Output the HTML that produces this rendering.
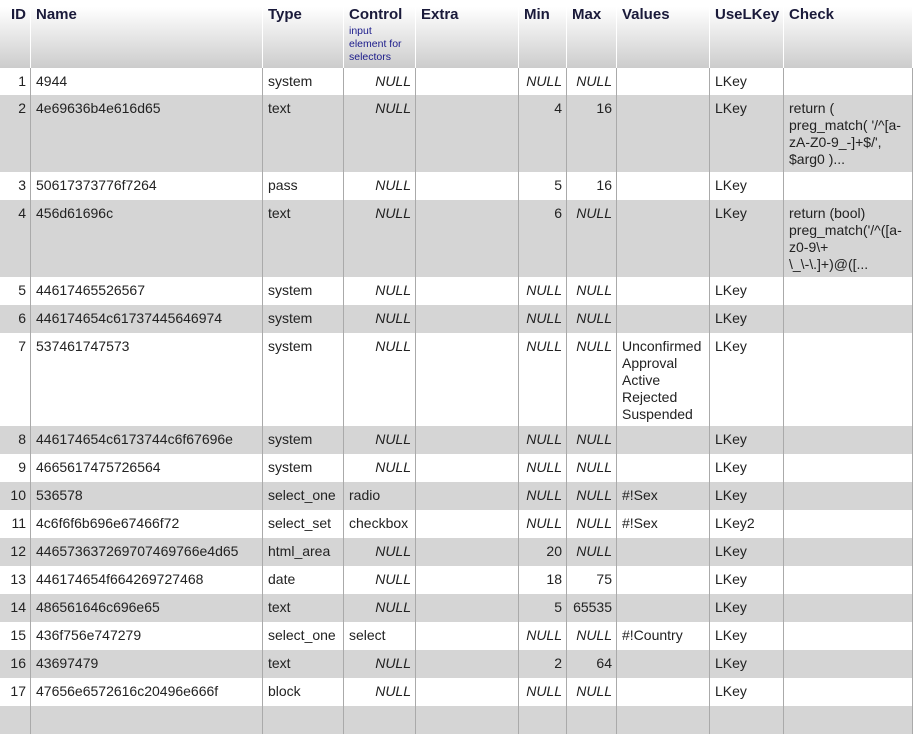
<!DOCTYPE html>
<html><head><meta charset="utf-8"><style>
*{margin:0;padding:0;box-sizing:border-box}
body{width:913px;height:712px;overflow:hidden;background:#fff;font-family:"Liberation Sans",Arial,sans-serif;font-size:14px;color:#222}
.r{display:flex;width:913px}
.c{border-right:1px solid #aaa;padding:5px 4px 0 5px;line-height:17px;overflow:hidden;flex:none}
.g{background:#d5d5d5}
.h{height:68px;background:linear-gradient(#fff 0%,#fff 10%,#ccc 100%)}
.h .c{border-right:1px solid #fff;font-weight:bold;color:#1a1a3a;padding-top:6px;font-size:15px}
.rt{text-align:right}
i{font-style:italic}
.sub{font-size:10.5px;font-weight:normal;color:#1a1a8a;line-height:13px;display:block;margin-top:2px}
.w0{width:31px}.w1{width:232px}.w2{width:81px}.w3{width:72px}.w4{width:103px}.w5{width:48px}.w6{width:50px}.w7{width:93px}.w8{width:74px}.w9{width:129px}
</style></head><body>
<div class="r h"><div class="c w0 rt">ID</div><div class="c w1">Name</div><div class="c w2">Type</div><div class="c w3">Control<span class="sub">input<br>element for<br>selectors</span></div><div class="c w4">Extra</div><div class="c w5">Min</div><div class="c w6">Max</div><div class="c w7">Values</div><div class="c w8">UseLKey</div><div class="c w9">Check</div></div>

<div class="r" style="height:27px"><div class="c w0 rt">1</div><div class="c w1">4944</div><div class="c w2">system</div><div class="c w3 rt"><i>NULL</i></div><div class="c w4"></div><div class="c w5 rt"><i>NULL</i></div><div class="c w6 rt"><i>NULL</i></div><div class="c w7"></div><div class="c w8">LKey</div><div class="c w9"></div></div>
<div class="r g" style="height:77px"><div class="c w0 rt">2</div><div class="c w1">4e69636b4e616d65</div><div class="c w2">text</div><div class="c w3 rt"><i>NULL</i></div><div class="c w4"></div><div class="c w5 rt">4</div><div class="c w6 rt">16</div><div class="c w7"></div><div class="c w8">LKey</div><div class="c w9">return (<br>preg_match( '/^[a-<br>zA-Z0-9_-]+$/',<br>$arg0 )...</div></div>
<div class="r" style="height:28px"><div class="c w0 rt">3</div><div class="c w1">50617373776f7264</div><div class="c w2">pass</div><div class="c w3 rt"><i>NULL</i></div><div class="c w4"></div><div class="c w5 rt">5</div><div class="c w6 rt">16</div><div class="c w7"></div><div class="c w8">LKey</div><div class="c w9"></div></div>
<div class="r g" style="height:77px"><div class="c w0 rt">4</div><div class="c w1">456d61696c</div><div class="c w2">text</div><div class="c w3 rt"><i>NULL</i></div><div class="c w4"></div><div class="c w5 rt">6</div><div class="c w6 rt"><i>NULL</i></div><div class="c w7"></div><div class="c w8">LKey</div><div class="c w9">return (bool)<br>preg_match('/^([a-<br>z0-9\+<br>\_\-\.]+)@([...</div></div>
<div class="r" style="height:28px"><div class="c w0 rt">5</div><div class="c w1">44617465526567</div><div class="c w2">system</div><div class="c w3 rt"><i>NULL</i></div><div class="c w4"></div><div class="c w5 rt"><i>NULL</i></div><div class="c w6 rt"><i>NULL</i></div><div class="c w7"></div><div class="c w8">LKey</div><div class="c w9"></div></div>
<div class="r g" style="height:28px"><div class="c w0 rt">6</div><div class="c w1">446174654c61737445646974</div><div class="c w2">system</div><div class="c w3 rt"><i>NULL</i></div><div class="c w4"></div><div class="c w5 rt"><i>NULL</i></div><div class="c w6 rt"><i>NULL</i></div><div class="c w7"></div><div class="c w8">LKey</div><div class="c w9"></div></div>
<div class="r" style="height:93px"><div class="c w0 rt">7</div><div class="c w1">537461747573</div><div class="c w2">system</div><div class="c w3 rt"><i>NULL</i></div><div class="c w4"></div><div class="c w5 rt"><i>NULL</i></div><div class="c w6 rt"><i>NULL</i></div><div class="c w7">Unconfirmed<br>Approval<br>Active<br>Rejected<br>Suspended</div><div class="c w8">LKey</div><div class="c w9"></div></div>
<div class="r g" style="height:28px"><div class="c w0 rt">8</div><div class="c w1">446174654c6173744c6f67696e</div><div class="c w2">system</div><div class="c w3 rt"><i>NULL</i></div><div class="c w4"></div><div class="c w5 rt"><i>NULL</i></div><div class="c w6 rt"><i>NULL</i></div><div class="c w7"></div><div class="c w8">LKey</div><div class="c w9"></div></div>
<div class="r" style="height:28px"><div class="c w0 rt">9</div><div class="c w1">4665617475726564</div><div class="c w2">system</div><div class="c w3 rt"><i>NULL</i></div><div class="c w4"></div><div class="c w5 rt"><i>NULL</i></div><div class="c w6 rt"><i>NULL</i></div><div class="c w7"></div><div class="c w8">LKey</div><div class="c w9"></div></div>
<div class="r g" style="height:28px"><div class="c w0 rt">10</div><div class="c w1">536578</div><div class="c w2">select_one</div><div class="c w3">radio</div><div class="c w4"></div><div class="c w5 rt"><i>NULL</i></div><div class="c w6 rt"><i>NULL</i></div><div class="c w7">#!Sex</div><div class="c w8">LKey</div><div class="c w9"></div></div>
<div class="r" style="height:28px"><div class="c w0 rt">11</div><div class="c w1">4c6f6f6b696e67466f72</div><div class="c w2">select_set</div><div class="c w3">checkbox</div><div class="c w4"></div><div class="c w5 rt"><i>NULL</i></div><div class="c w6 rt"><i>NULL</i></div><div class="c w7">#!Sex</div><div class="c w8">LKey2</div><div class="c w9"></div></div>
<div class="r g" style="height:28px"><div class="c w0 rt">12</div><div class="c w1">446573637269707469766e4d65</div><div class="c w2">html_area</div><div class="c w3 rt"><i>NULL</i></div><div class="c w4"></div><div class="c w5 rt">20</div><div class="c w6 rt"><i>NULL</i></div><div class="c w7"></div><div class="c w8">LKey</div><div class="c w9"></div></div>
<div class="r" style="height:28px"><div class="c w0 rt">13</div><div class="c w1">446174654f664269727468</div><div class="c w2">date</div><div class="c w3 rt"><i>NULL</i></div><div class="c w4"></div><div class="c w5 rt">18</div><div class="c w6 rt">75</div><div class="c w7"></div><div class="c w8">LKey</div><div class="c w9"></div></div>
<div class="r g" style="height:28px"><div class="c w0 rt">14</div><div class="c w1">486561646c696e65</div><div class="c w2">text</div><div class="c w3 rt"><i>NULL</i></div><div class="c w4"></div><div class="c w5 rt">5</div><div class="c w6 rt">65535</div><div class="c w7"></div><div class="c w8">LKey</div><div class="c w9"></div></div>
<div class="r" style="height:28px"><div class="c w0 rt">15</div><div class="c w1">436f756e747279</div><div class="c w2">select_one</div><div class="c w3">select</div><div class="c w4"></div><div class="c w5 rt"><i>NULL</i></div><div class="c w6 rt"><i>NULL</i></div><div class="c w7">#!Country</div><div class="c w8">LKey</div><div class="c w9"></div></div>
<div class="r g" style="height:28px"><div class="c w0 rt">16</div><div class="c w1">43697479</div><div class="c w2">text</div><div class="c w3 rt"><i>NULL</i></div><div class="c w4"></div><div class="c w5 rt">2</div><div class="c w6 rt">64</div><div class="c w7"></div><div class="c w8">LKey</div><div class="c w9"></div></div>
<div class="r" style="height:28px"><div class="c w0 rt">17</div><div class="c w1">47656e6572616c20496e666f</div><div class="c w2">block</div><div class="c w3 rt"><i>NULL</i></div><div class="c w4"></div><div class="c w5 rt"><i>NULL</i></div><div class="c w6 rt"><i>NULL</i></div><div class="c w7"></div><div class="c w8">LKey</div><div class="c w9"></div></div>
<div class="r g" style="height:28px"><div class="c w0"></div><div class="c w1"></div><div class="c w2"></div><div class="c w3"></div><div class="c w4"></div><div class="c w5"></div><div class="c w6"></div><div class="c w7"></div><div class="c w8"></div><div class="c w9"></div></div>
</body></html>
